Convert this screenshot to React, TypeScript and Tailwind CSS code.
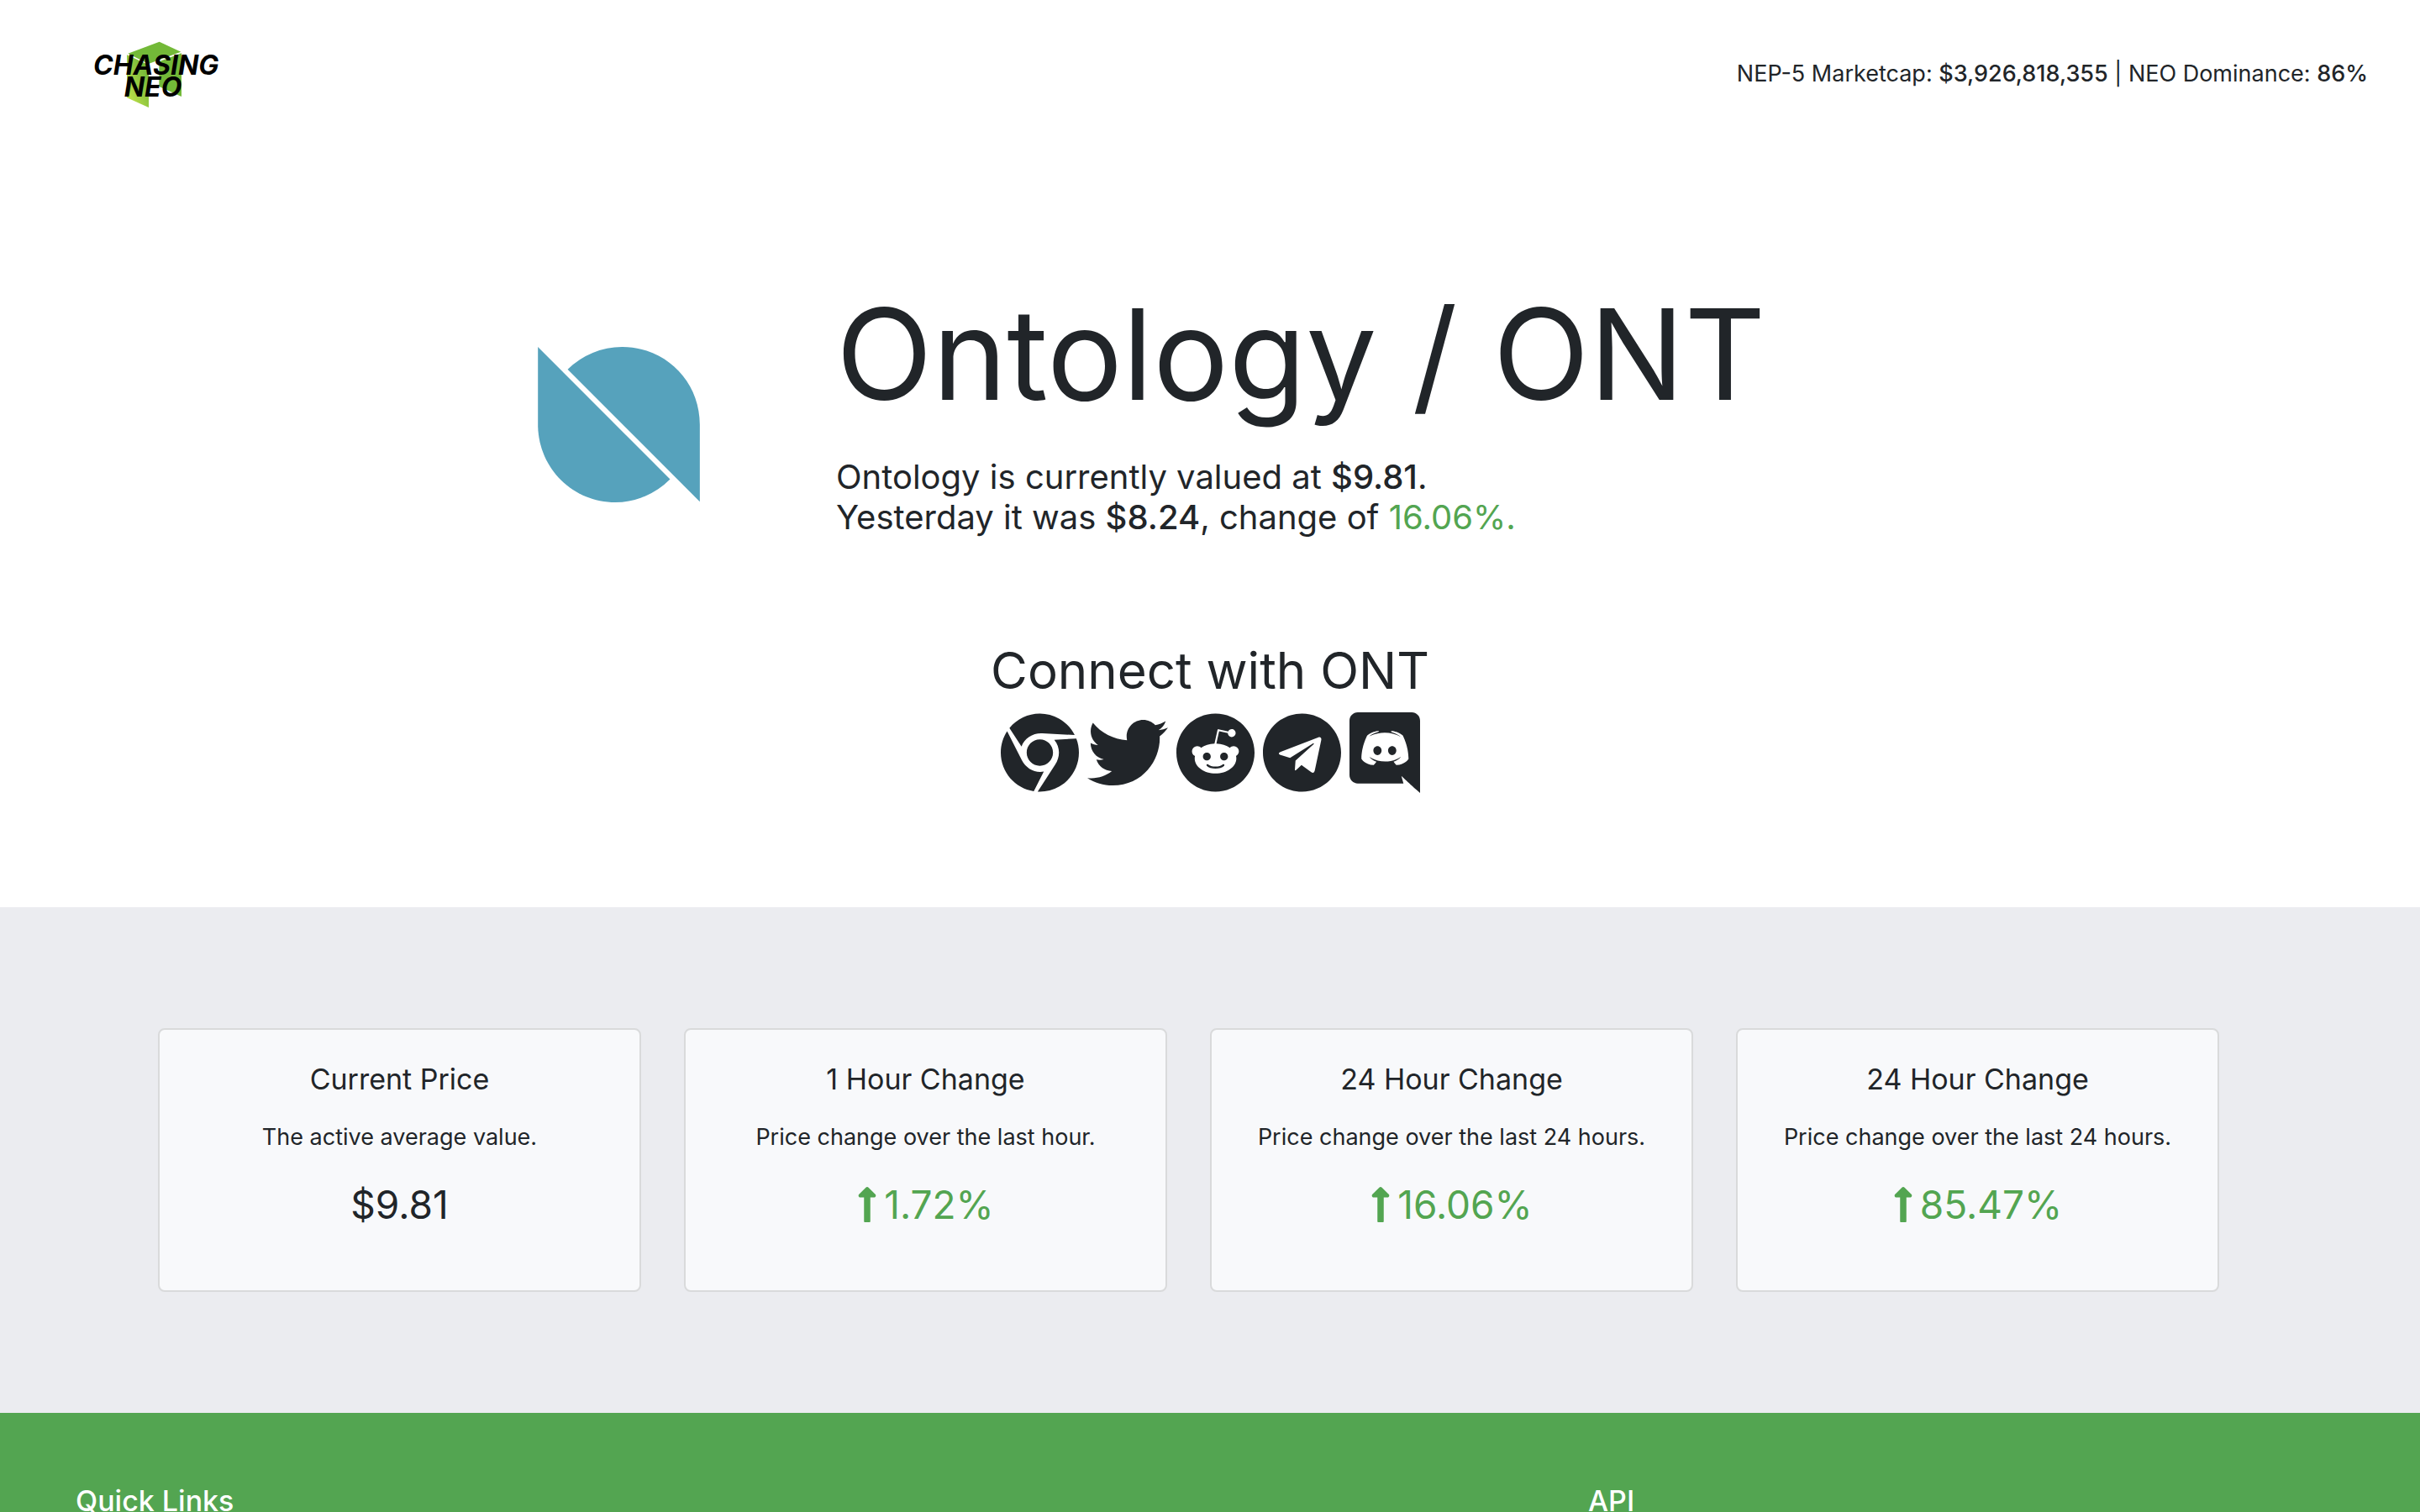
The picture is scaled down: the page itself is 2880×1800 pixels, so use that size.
import React from "react";
import { FaChrome, FaLongArrowAltUp, FaReddit, FaTelegram, FaTwitter } from "react-icons/fa";

function BrandLogo() {
  return (
    <svg viewBox="0 -6 660 360" className="h-[120px] w-[220px]" role="img" aria-label="Chasing NEO">
      <defs>
        <linearGradient id="leaf" x1="0" y1="1" x2="1" y2="0">
          <stop offset="0" stopColor="#cbe64c" />
          <stop offset="0.75" stopColor="#79bb3a" />
          <stop offset="1" stopColor="#70b638" />
        </linearGradient>
      </defs>
      <path d="M217 101 329 59 406 95 290 138Z" fill="#73b938" />
      <path d="M213 106 291 142V294L213 259Z" fill="url(#leaf)" />
      <path d="M328 130 408 100V255L328 219Z" fill="#73b938" />
      <g fontFamily="Inter, sans-serif" fontSize="96" fontWeight="700" fontStyle="italic" fill="#000">
        <text x="93" y="178">CHASING</text>
        <text x="203" y="255">NEO</text>
      </g>
    </svg>
  );
}

function OntologyMark() {
  return (
    <svg viewBox="0 0 577 554" className="h-[185px] w-[193px] shrink-0" fill="#56a2bc" role="img" aria-label="Ontology">
      <path d="M0 0 471 472A276 276 0 0 1 276 554C122 554 0 430 0 276Z" />
      <path d="M577 552 106 80A276 276 0 0 1 301 0C455 0 577 122 577 276Z" />
    </svg>
  );
}

function DiscordIcon() {
  return (
    <svg viewBox="0 0 448 512" className="h-24 w-[84px]" fill="currentColor" aria-hidden="true">
      <path d="M297.216 243.2c0 15.616-11.52 28.416-26.112 28.416-14.336 0-26.112-12.8-26.112-28.416s11.52-28.416 26.112-28.416c14.592 0 26.112 12.8 26.112 28.416zm-119.552-28.416c-14.592 0-26.112 12.8-26.112 28.416s11.776 28.416 26.112 28.416c14.592 0 26.112-12.8 26.112-28.416.256-15.616-11.52-28.416-26.112-28.416zM448 52.736V512c-64.494-56.994-43.868-38.128-118.784-107.776l13.568 47.36H52.48C23.552 451.584 0 428.032 0 398.848V52.736C0 23.552 23.552 0 52.48 0h343.04C424.448 0 448 23.552 448 52.736zm-72.96 242.688c0-82.432-36.864-149.248-36.864-149.248-36.864-27.648-71.936-26.88-71.936-26.88l-3.584 4.096c43.52 13.312 63.744 32.512 63.744 32.512-60.811-33.329-132.244-33.335-191.232-7.424-9.472 4.352-15.104 7.424-15.104 7.424s21.248-20.224 67.328-33.536l-2.56-3.072s-35.072-.768-71.936 26.88c0 0-36.864 66.816-36.864 149.248 0 0 21.504 37.12 78.08 38.912 0 0 9.472-11.52 17.152-21.248-32.512-9.728-44.8-30.208-44.8-30.208 3.766 2.636 9.976 6.053 10.496 6.4 43.21 24.198 104.588 32.126 159.744 8.96 8.96-3.328 18.944-8.192 29.44-15.104 0 0-12.8 20.992-46.336 30.464 7.68 9.728 16.896 20.736 16.896 20.736 56.576-1.792 78.336-38.912 78.336-38.912z" />
    </svg>
  );
}

const links = [
  { label: "Website", icon: <FaChrome className="h-24 w-[93px]" /> },
  { label: "Twitter", icon: <FaTwitter className="size-24" /> },
  { label: "Reddit", icon: <FaReddit className="h-24 w-[93px]" preserveAspectRatio="xMidYMid slice" /> },
  { label: "Telegram", icon: <FaTelegram className="h-24 w-[93px]" /> },
  { label: "Discord", icon: <DiscordIcon /> },
];

const cards = [
  { title: "Current Price", text: "The active average value.", value: "$9.81", up: false },
  { title: "1 Hour Change", text: "Price change over the last hour.", value: "1.72%", up: true },
  { title: "24 Hour Change", text: "Price change over the last 24 hours.", value: "16.06%", up: true },
  { title: "24 Hour Change", text: "Price change over the last 24 hours.", value: "85.47%", up: true },
];

export default function App() {
  return (
    <div className="flex h-screen flex-col overflow-hidden bg-white font-['Inter',sans-serif] text-[#212529]">
      <header className="flex h-44 shrink-0 items-center justify-between pr-[62px] pl-20">
        <a href="#home">
          <BrandLogo />
        </a>
        <p className="text-[27px] leading-9">
          NEP-5 Marketcap: <strong className="font-medium">$3,926,818,355</strong> | NEO Dominance:{" "}
          <strong className="font-medium">86%</strong>
        </p>
      </header>

      <main className="shrink-0">
        <section className="pt-40 pb-[136px]">
          <div className="mx-auto flex max-w-[1600px] items-end gap-[162px]">
            <div className="pb-[42px]">
              <OntologyMark />
            </div>
            <div>
              <h1 className="text-[150px] leading-[172px]">Ontology / ONT</h1>
              <p className="mt-9 text-[40px] leading-[48px]">
                Ontology is currently valued at <strong className="font-medium">$9.81</strong>.
                <br />
                Yesterday it was <strong className="font-medium">$8.24</strong>, change of{" "}
                <span className="text-[#53a551]">16.06%.</span>
              </p>
            </div>
          </div>
          <div className="mt-[124px] flex flex-col items-center">
            <h2 className="text-[60px] leading-[68px]">Connect with ONT</h2>
            <ul className="mt-4 flex gap-[10px]">
              {links.map((link) => (
                <li key={link.label}>
                  <a href="#connect" aria-label={link.label} className="block">
                    {link.icon}
                  </a>
                </li>
              ))}
            </ul>
          </div>
        </section>

        <section className="grid grid-cols-4 gap-[51px] bg-[#ebecf0] py-36 pr-[239px] pl-[188px]">
          {cards.map((card, i) => (
            <article
              key={i}
              className="flex flex-col items-center rounded-lg border-2 border-[#d9dadb] bg-[#f8f9fb] px-8 pt-10 pb-[74px] text-center"
            >
              <h3 className="text-[34px] leading-[38px]">{card.title}</h3>
              <p className="mt-[30px] text-[27px] leading-10">{card.text}</p>
              {card.up ? (
                <p className="mt-8 flex items-center gap-2 text-[46px] leading-[56px] text-[#53a551]">
                  <FaLongArrowAltUp className="h-12 w-6" aria-label="up" />
                  {card.value}
                </p>
              ) : (
                <p className="mt-8 text-[46px] leading-[56px]">{card.value}</p>
              )}
            </article>
          ))}
        </section>
      </main>

      <footer className="grid grow grid-cols-[2fr_1fr] bg-[#53a551] px-[90px] pt-[85px] text-white">
        <h4 className="text-[34px] leading-10 font-medium">Quick Links</h4>
        <h4 className="text-[34px] leading-10 font-medium">API</h4>
      </footer>
    </div>
  );
}
